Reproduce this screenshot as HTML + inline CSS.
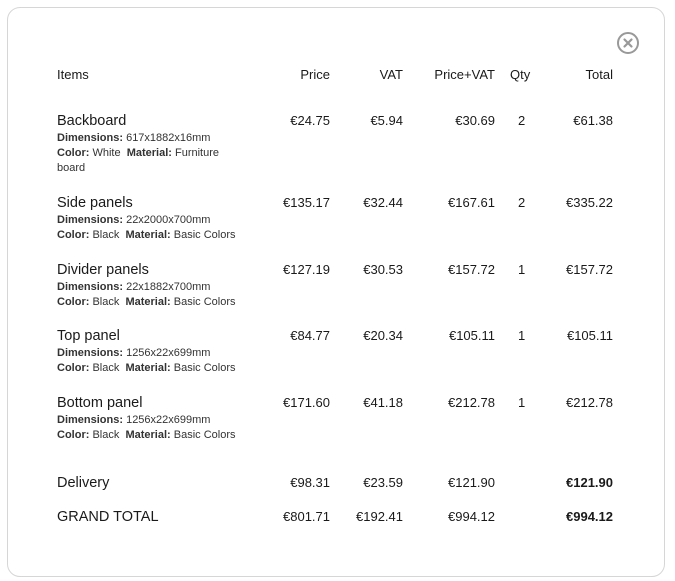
<!DOCTYPE html>
<html><head><meta charset="utf-8"><style>
body{margin:0;background:#fff;font-family:"Liberation Sans",sans-serif;color:#1a1a1a;}
.box{position:absolute;left:7px;top:7px;width:656px;height:568px;border:1px solid #d6d6d6;border-radius:13px;}
.t{position:absolute;font-size:13px;white-space:nowrap;}
.r{text-align:right;}
.n{font-size:14.5px;}
.s{font-size:11px;color:#333;line-height:15px;}
.s b{font-weight:bold;}
.x{position:absolute;left:617px;top:32px;width:18px;height:18px;border:2px solid #999;border-radius:50%;}
</style></head><body>
<div class="box"></div>
<div class="x"><svg width="18" height="18"><path d="M5.5 5.5L12.5 12.5M12.5 5.5L5.5 12.5" stroke="#999" stroke-width="2.2" stroke-linecap="round"/></svg></div>
<div id="c"></div>
<script>
var H='';
function t(x,y,txt,cls,right){H+='<div class="t '+(cls||'')+'" style="'+(right?'right:'+(675-x)+'px;':'left:'+x+'px;')+'top:'+y+'px">'+txt+'</div>';}
t(57,67,'Items');t(330,67,'Price','',1);t(403,67,'VAT','',1);t(495,67,'Price+VAT','',1);t(510,67,'Qty');t(613,67,'Total','',1);
var rows=[[113,'Backboard','617x1882x16mm','White','Furniture<br>board','€24.75','€5.94','€30.69','2','€61.38'],
[195,'Side panels','22x2000x700mm','Black','Basic Colors','€135.17','€32.44','€167.61','2','€335.22'],
[262,'Divider panels','22x1882x700mm','Black','Basic Colors','€127.19','€30.53','€157.72','1','€157.72'],
[328,'Top panel','1256x22x699mm','Black','Basic Colors','€84.77','€20.34','€105.11','1','€105.11'],
[395,'Bottom panel','1256x22x699mm','Black','Basic Colors','€171.60','€41.18','€212.78','1','€212.78']];
rows.forEach(function(r){var y=r[0];
t(57,y,r[1],'n');
H+='<div class="t s" style="left:57px;top:'+(y+18)+'px;white-space:normal;width:180px"><b>Dimensions:</b> '+r[2]+'<br><b>Color:</b> '+r[3]+'&nbsp; <b>Material:</b> '+r[4]+'</div>';
t(330,y,r[5],'',1);t(403,y,r[6],'',1);t(495,y,r[7],'',1);t(518,y,r[8]);t(613,y,r[9],'',1);});
t(57,475,'Delivery','n');t(330,475,'€98.31','',1);t(403,475,'€23.59','',1);t(495,475,'€121.90','',1);t(613,475,'<b>€121.90</b>','',1);
t(57,509,'GRAND TOTAL','n');t(330,509,'€801.71','',1);t(403,509,'€192.41','',1);t(495,509,'€994.12','',1);t(613,509,'<b>€994.12</b>','',1);
document.getElementById('c').innerHTML=H;
</script>
</body></html>
